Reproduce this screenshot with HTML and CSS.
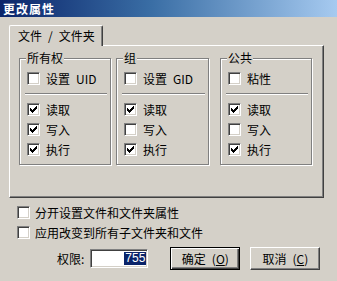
FILE: index.html
```html
<!DOCTYPE html>
<html lang="zh-CN">
<head>
  <meta charset="UTF-8" />
  <title>更改属性</title>
  <link rel="stylesheet" href="styles.css">
</head>
<body>
  <div class="window">
    <div class="titlebar">更改属性</div>

    <div class="main">
      <div class="tab">文件&ensp;/&ensp;文件夹</div>

      <div class="panel">
        <div class="group">
          <span class="group-title">所有权</span>
          <label class="row"><span class="check"></span>设置&ensp;UID</label>
          <div class="separator"></div>
          <label class="row"><span class="check checked"><svg width="9" height="9" viewBox="0 0 9 9"><path d="M7 1h1v1h-1z M6 2h2v1h-2z M1 3h1v1h-1z M5 3h3v1h-3z M1 4h2v1h-2z M4 4h3v1h-3z M1 5h5v1h-5z M2 6h3v1h-3z M3 7h1v1h-1z"/></svg></span>读取</label>
          <label class="row"><span class="check checked"><svg width="9" height="9" viewBox="0 0 9 9"><path d="M7 1h1v1h-1z M6 2h2v1h-2z M1 3h1v1h-1z M5 3h3v1h-3z M1 4h2v1h-2z M4 4h3v1h-3z M1 5h5v1h-5z M2 6h3v1h-3z M3 7h1v1h-1z"/></svg></span>写入</label>
          <label class="row"><span class="check checked"><svg width="9" height="9" viewBox="0 0 9 9"><path d="M7 1h1v1h-1z M6 2h2v1h-2z M1 3h1v1h-1z M5 3h3v1h-3z M1 4h2v1h-2z M4 4h3v1h-3z M1 5h5v1h-5z M2 6h3v1h-3z M3 7h1v1h-1z"/></svg></span>执行</label>
        </div>

        <div class="group group-wide">
          <span class="group-title">组</span>
          <label class="row"><span class="check"></span>设置&ensp;GID</label>
          <div class="separator"></div>
          <label class="row"><span class="check checked"><svg width="9" height="9" viewBox="0 0 9 9"><path d="M7 1h1v1h-1z M6 2h2v1h-2z M1 3h1v1h-1z M5 3h3v1h-3z M1 4h2v1h-2z M4 4h3v1h-3z M1 5h5v1h-5z M2 6h3v1h-3z M3 7h1v1h-1z"/></svg></span>读取</label>
          <label class="row"><span class="check"></span>写入</label>
          <label class="row"><span class="check checked"><svg width="9" height="9" viewBox="0 0 9 9"><path d="M7 1h1v1h-1z M6 2h2v1h-2z M1 3h1v1h-1z M5 3h3v1h-3z M1 4h2v1h-2z M4 4h3v1h-3z M1 5h5v1h-5z M2 6h3v1h-3z M3 7h1v1h-1z"/></svg></span>执行</label>
        </div>

        <div class="group group-public">
          <span class="group-title">公共</span>
          <label class="row"><span class="check"></span>粘性</label>
          <div class="separator"></div>
          <label class="row"><span class="check checked"><svg width="9" height="9" viewBox="0 0 9 9"><path d="M7 1h1v1h-1z M6 2h2v1h-2z M1 3h1v1h-1z M5 3h3v1h-3z M1 4h2v1h-2z M4 4h3v1h-3z M1 5h5v1h-5z M2 6h3v1h-3z M3 7h1v1h-1z"/></svg></span>读取</label>
          <label class="row"><span class="check"></span>写入</label>
          <label class="row"><span class="check checked"><svg width="9" height="9" viewBox="0 0 9 9"><path d="M7 1h1v1h-1z M6 2h2v1h-2z M1 3h1v1h-1z M5 3h3v1h-3z M1 4h2v1h-2z M4 4h3v1h-3z M1 5h5v1h-5z M2 6h3v1h-3z M3 7h1v1h-1z"/></svg></span>执行</label>
        </div>
      </div>

      <div class="options">
        <label class="row option"><span class="check"></span>分开设置文件和文件夹属性</label>
        <label class="row option"><span class="check"></span>应用改变到所有子文件夹和文件</label>
      </div>

      <div class="actions">
        <span class="perm-label">权限:</span>
        <div class="perm-input"><span class="selected">755</span></div>
        <button class="btn btn-default">确定&ensp;(<u>O</u>)</button>
        <button class="btn">取消&ensp;(<u>C</u>)</button>
      </div>
    </div>
  </div>
</body>
</html>
```

FILE: styles.css
```css
* {
  margin: 0;
  padding: 0;
  box-sizing: border-box;
}

body {
  width: 337px;
  height: 281px;
  overflow: hidden;
  background-color: #d4d0c8;
  font-family: "Noto Sans CJK SC", "Liberation Sans", sans-serif;
  font-size: 12px;
  color: #000;
}

.titlebar {
  height: 17px;
  line-height: 17px;
  padding-left: 3px;
  color: #fff;
  font-weight: bold;
  letter-spacing: 1px;
  background: linear-gradient(to right, #0a246a, #3a6ea5 45%, #a6caf0);
}

.main {
  padding: 8px 0 0 9px;
}

/* tab + page */
.tab {
  position: relative;
  z-index: 1;
  width: 94px;
  height: 21px;
  line-height: 20px;
  padding-left: 8px;
  background-color: #d4d0c8;
  border-top: 1px solid #fff;
  border-left: 1px solid #fff;
  border-right: 1px solid #404040;
  border-radius: 2px 2px 0 0;
  box-shadow: inset -1px 0 #808080;
}

.panel {
  display: flex;
  width: 315px;
  height: 153px;
  margin-top: -1px;
  padding: 12px 9px;
  border: 1px solid;
  border-color: #fff #404040 #404040 #fff;
  box-shadow: inset -1px -1px #808080;
}

/* group boxes */
.group {
  position: relative;
  width: 92px;
  height: 107px;
  margin-right: 5px;
  padding: 9px 3px 0 5px;
  border: 1px solid #808080;
  box-shadow: inset 1px 1px #fff, 1px 1px #fff;
}

.group-wide {
  width: 93px;
}

.group-public {
  margin-left: 6px;
  margin-right: 0;
}

.group-title {
  position: absolute;
  top: -9px;
  left: 6px;
  padding: 0 1px;
  line-height: 16px;
  background-color: #d4d0c8;
}

.separator {
  height: 2px;
  margin: 5px 0 4px;
  border-top: 1px solid #808080;
  border-bottom: 1px solid #fff;
}

.row {
  display: flex;
  align-items: center;
  height: 20px;
  padding-left: 2px;
  white-space: nowrap;
}

/* classic sunken checkbox */
.check {
  display: flex;
  align-items: center;
  justify-content: center;
  flex: none;
  width: 13px;
  height: 13px;
  margin-right: 6px;
  background-color: #fff;
  border: 1px solid;
  border-color: #808080 #fff #fff #808080;
  box-shadow: inset 1px 1px #404040, inset -1px -1px #d4d0c8;
}

.check svg {
  display: block;
  shape-rendering: crispEdges;
}

.options {
  margin: 4px 0 0 6px;
}

.option .check {
  margin-right: 5px;
}

/* bottom row */
.actions {
  display: flex;
  align-items: center;
  height: 23px;
  margin-top: 5px;
  padding-left: 48px;
}

.perm-label {
  margin-right: 6px;
}

.perm-input {
  display: flex;
  align-items: center;
  justify-content: flex-end;
  width: 58px;
  height: 19px;
  padding-right: 1px;
  background-color: #fff;
  border: 1px solid;
  border-color: #808080 #fff #fff #808080;
  box-shadow: inset 1px 1px #404040, inset -1px -1px #d4d0c8;
}

.selected {
  padding: 0 1px;
  line-height: 13px;
  font-family: "Liberation Sans", sans-serif;
  background-color: #0a246a;
  color: #fff;
}

.btn {
  width: 70px;
  height: 23px;
  margin-left: 10px;
  font: inherit;
  color: #000;
  background-color: #d4d0c8;
  border: 1px solid;
  border-color: #fff #404040 #404040 #fff;
  box-shadow: inset -1px -1px #808080;
}

.btn-default {
  margin-left: 22px;
  border-color: #000;
  box-shadow: inset 1px 1px #fff, inset -1px -1px #404040, inset -2px -2px #808080;
}
```
